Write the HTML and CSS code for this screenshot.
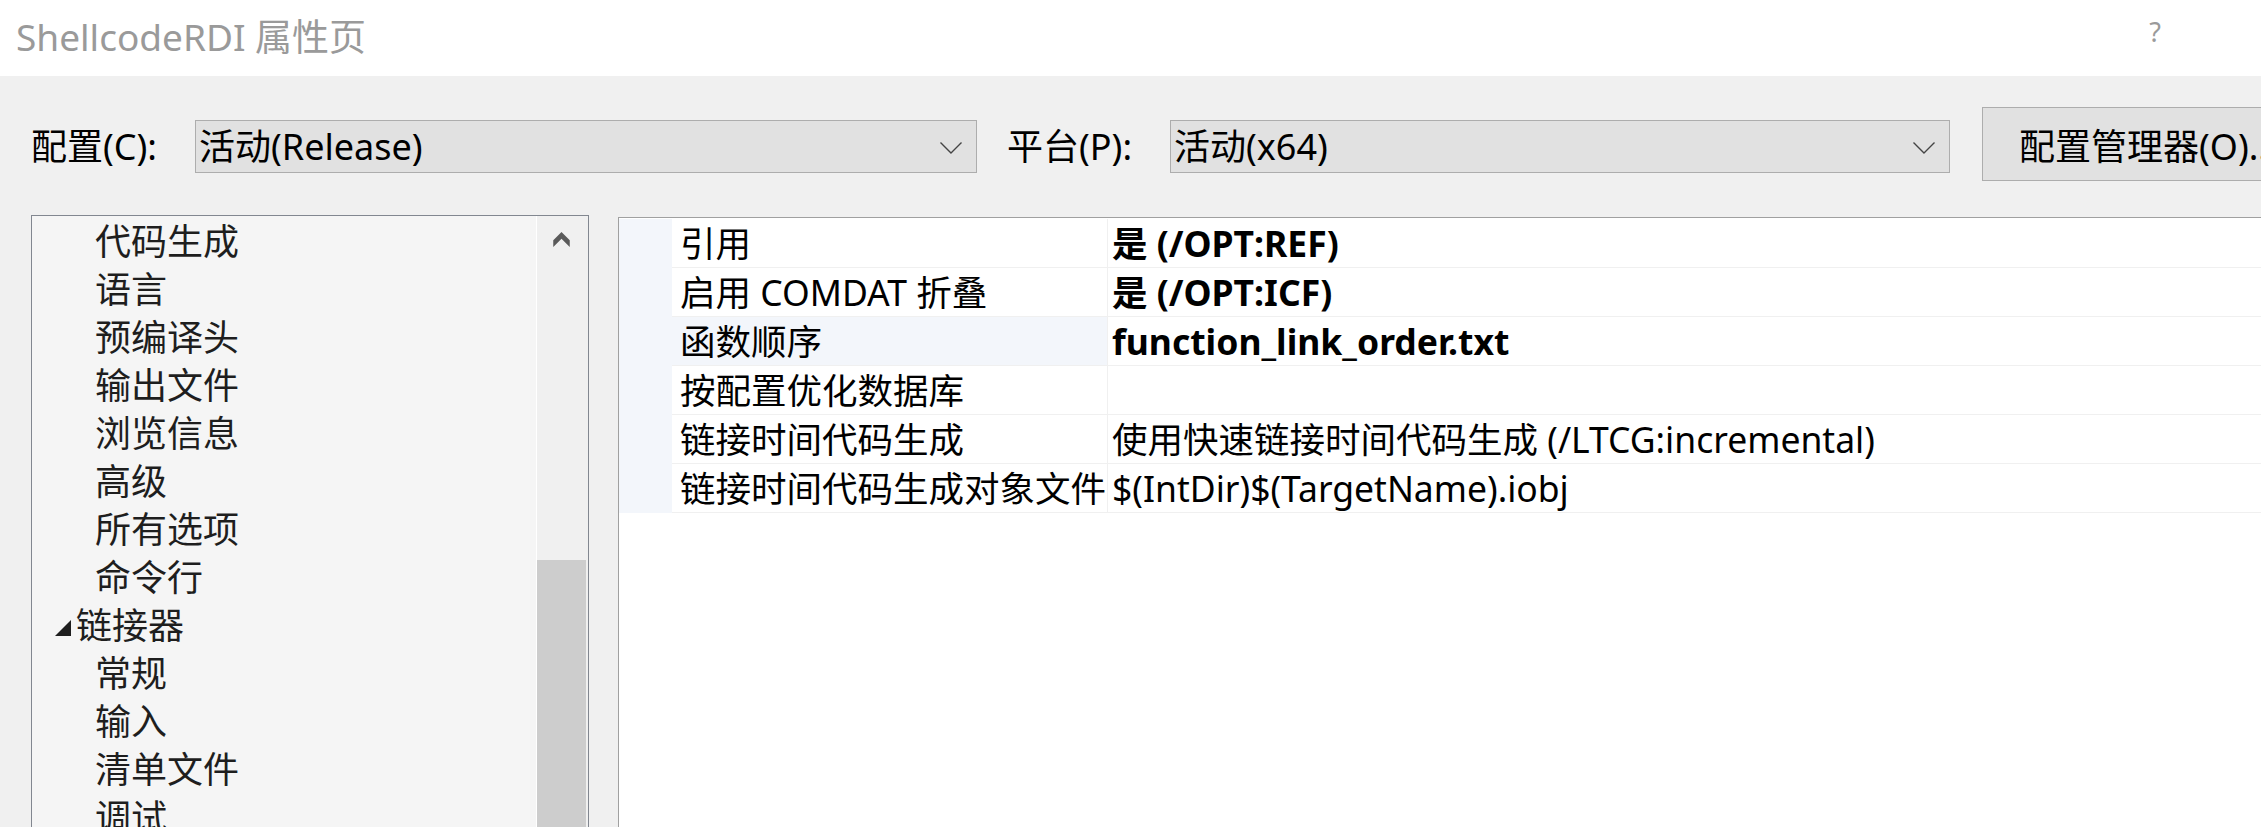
FILE: index.html
```html
<!DOCTYPE html>
<html lang="zh-CN">
<head>
<meta charset="utf-8">
<title>ShellcodeRDI 属性页</title>
<link rel="stylesheet" href="styles.css">
</head>
<body>
<div class="window">
  <header class="titlebar">
    <span class="title">ShellcodeRDI 属性页</span>
    <span class="help">?</span>
  </header>

  <div class="toolbar">
    <span class="label">配置(C):</span>
    <div class="combo combo-config">
      <span class="combo-text">活动(Release)</span>
      <svg class="chevron" width="22" height="12" viewBox="0 0 22 12"><polyline points="0.5,0.5 11,11 21.5,0.5" fill="none" stroke="#444" stroke-width="1.4"/></svg>
    </div>
    <span class="label label-platform">平台(P):</span>
    <div class="combo combo-platform">
      <span class="combo-text">活动(x64)</span>
      <svg class="chevron" width="22" height="12" viewBox="0 0 22 12"><polyline points="0.5,0.5 11,11 21.5,0.5" fill="none" stroke="#444" stroke-width="1.4"/></svg>
    </div>
    <button class="btn">配置管理器(O)...</button>
  </div>

  <div class="main">
    <div class="tree">
      <ul class="tree-list">
        <li class="tree-item">代码生成</li>
        <li class="tree-item">语言</li>
        <li class="tree-item">预编译头</li>
        <li class="tree-item">输出文件</li>
        <li class="tree-item">浏览信息</li>
        <li class="tree-item">高级</li>
        <li class="tree-item">所有选项</li>
        <li class="tree-item">命令行</li>
        <li class="tree-item group">
          <svg class="expander" width="16" height="16" viewBox="0 0 16 16"><polygon points="16,0 16,16 0,16" fill="#1e1e1e"/></svg>
          <span>链接器</span>
        </li>
        <li class="tree-item">常规</li>
        <li class="tree-item">输入</li>
        <li class="tree-item">清单文件</li>
        <li class="tree-item">调试</li>
      </ul>
      <div class="scrollbar">
        <svg class="scroll-up" width="21" height="19" viewBox="0 0 21 19"><polygon points="10.5,0 21,10.5 21,19 10.5,8.5 0,19 0,10.5" fill="#5a5a5a"/></svg>
        <div class="thumb"></div>
      </div>
    </div>

    <div class="grid">
      <div class="row">
        <div class="gutter"></div>
        <div class="name">引用</div>
        <div class="value bold">是 (/OPT:REF)</div>
      </div>
      <div class="row">
        <div class="gutter"></div>
        <div class="name">启用 COMDAT 折叠</div>
        <div class="value bold">是 (/OPT:ICF)</div>
      </div>
      <div class="row selected">
        <div class="gutter"></div>
        <div class="name">函数顺序</div>
        <div class="value bold">function_link_order.txt</div>
      </div>
      <div class="row">
        <div class="gutter"></div>
        <div class="name">按配置优化数据库</div>
        <div class="value"></div>
      </div>
      <div class="row">
        <div class="gutter"></div>
        <div class="name">链接时间代码生成</div>
        <div class="value">使用快速链接时间代码生成 (/LTCG:incremental)</div>
      </div>
      <div class="row">
        <div class="gutter"></div>
        <div class="name">链接时间代码生成对象文件</div>
        <div class="value">$(IntDir)$(TargetName).iobj</div>
      </div>
    </div>
  </div>
</div>
</body>
</html>
```

FILE: styles.css
```css
html, body {
  margin: 0;
  padding: 0;
}

body {
  width: 2261px;
  height: 827px;
  overflow: hidden;
  background: #f0f0f0;
  font-family: "Noto Sans", "Noto Sans CJK SC", sans-serif;
  color: #000;
}

.window {
  width: 2261px;
  height: 827px;
  overflow: hidden;
}

/* title bar */
.titlebar {
  height: 76px;
  background: #fff;
  display: flex;
  align-items: flex-start;
}

.title {
  margin-left: 16px;
  margin-top: 12px;
  font-size: 37px;
  line-height: 50px;
  color: #9a9a9a;
  white-space: nowrap;
}

.help {
  margin-left: auto;
  margin-right: 100px;
  margin-top: 14px;
  font-size: 27px;
  line-height: 36px;
  color: #9a9a9a;
}

/* toolbar */
.toolbar {
  height: 139px;
  box-sizing: border-box;
  padding-top: 31px;
  padding-left: 31px;
  display: flex;
  align-items: flex-start;
}

.label {
  flex-shrink: 0;
  width: 164px;
  margin-top: 13px;
  line-height: 53px;
  font-size: 36px;
  white-space: nowrap;
}

.label-platform {
  margin-left: 30px;
  width: 163px;
}

.combo {
  flex-shrink: 0;
  margin-top: 13px;
  height: 53px;
  box-sizing: border-box;
  border: 1px solid #adadad;
  background: #e1e1e1;
  display: flex;
  align-items: center;
  padding-left: 3px;
  padding-right: 14px;
  font-size: 36px;
}

.combo-text {
  flex: 1;
  white-space: nowrap;
  line-height: 51px;
}

.chevron {
  flex-shrink: 0;
  margin-top: 2px;
}

.combo-config {
  width: 782px;
}

.combo-platform {
  width: 780px;
}

.btn {
  flex-shrink: 0;
  margin-left: 32px;
  height: 74px;
  width: 380px;
  box-sizing: border-box;
  border: 1px solid #adadad;
  background: #e1e1e1;
  padding: 0 0 0 36px;
  font-family: inherit;
  font-size: 36px;
  color: #000;
  text-align: left;
  white-space: nowrap;
}

/* main area */
.main {
  display: flex;
  align-items: flex-start;
  padding-left: 31px;
}

.tree {
  flex-shrink: 0;
  width: 558px;
  height: 660px;
  box-sizing: border-box;
  border: 1px solid #828790;
  background: #f5f5f5;
  display: flex;
}

.tree-list {
  flex: 1;
  list-style: none;
  margin: 0;
  padding: 2px 0 0 0;
}

.tree-item {
  height: 48px;
  line-height: 48px;
  font-size: 36px;
  color: #1e1e1e;
  padding-left: 63px;
  white-space: nowrap;
}

.tree-item.group {
  padding-left: 23px;
  display: flex;
  align-items: center;
  gap: 5px;
}

.expander {
  flex-shrink: 0;
  margin-top: 4px;
}

.scrollbar {
  flex-shrink: 0;
  width: 52px;
  box-sizing: border-box;
  border-left: 1px solid #fff;
  background: #f0f0f0;
  display: flex;
  flex-direction: column;
  align-items: center;
}

.scroll-up {
  margin-top: 16px;
  margin-right: 2px;
}

.thumb {
  align-self: flex-start;
  margin-top: 313px;
  width: 49px;
  height: 400px;
  background: #cdcdcd;
}

/* property grid */
.grid {
  flex-shrink: 0;
  margin-left: 29px;
  margin-top: 2px;
  width: 1700px;
  height: 700px;
  box-sizing: border-box;
  border-left: 1px solid #a0a0a0;
  border-top: 1px solid #a0a0a0;
  background: #fff;
  padding-top: 1px;
}

.row {
  display: flex;
  height: 49px;
}

.gutter {
  flex-shrink: 0;
  width: 53px;
  background: #f3f6fb;
}

.name {
  flex-shrink: 0;
  width: 436px;
  box-sizing: border-box;
  border-right: 1px solid #f0f0f0;
  border-bottom: 1px solid #f0f0f0;
  padding-left: 8px;
  font-size: 35.5px;
  line-height: 48px;
  white-space: nowrap;
  overflow: hidden;
}

.row.selected .name {
  background: #f3f6fb;
}

.value {
  flex: 1;
  box-sizing: border-box;
  border-bottom: 1px solid #f0f0f0;
  padding-left: 4px;
  font-size: 35.5px;
  line-height: 48px;
  white-space: nowrap;
  overflow: hidden;
}

.bold {
  font-weight: 700;
}
```
